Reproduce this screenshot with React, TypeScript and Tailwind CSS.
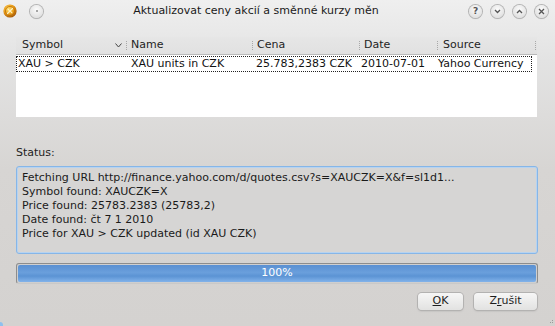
import React from "react";

const font = { fontFamily: '"DejaVu Sans", "Liberation Sans", sans-serif' };

function RoundBtn({ children }: { children: React.ReactNode }) {
  return (
    <div className="w-[13px] h-[13px] rounded-full bg-[radial-gradient(circle_at_50%_35%,#fbfbfb,#d8d8d8)] shadow-[0_0_0_1px_#b4b4b4,0_1px_1px_#c8c8c8] flex items-center justify-center">
      {children}
    </div>
  );
}

function Sep() {
  return <div className="w-0 h-[9px] border-l border-dotted border-[#a9a9a9] shrink-0" />;
}

export default function App() {
  return (
    <div
      className="w-[555px] h-[326px] flex flex-col text-[11px] text-[#1e1e1e] bg-[linear-gradient(to_bottom,#efefef_0px,#e3e3e3_60px,#d7d5d3_170px,#d4d2d0_326px)] relative overflow-hidden"
      style={font}
    >
      {/* Title bar */}
      <div className="h-[22px] flex items-center pl-[3px] pr-[7px] shrink-0">
        <div className="flex items-center gap-[13px] w-[40px] shrink-0">
          <svg width="14" height="14" viewBox="0 0 14 14">
            <defs>
              <radialGradient id="gold" cx="40%" cy="35%" r="65%">
                <stop offset="0" stopColor="#ffdf70" />
                <stop offset="0.6" stopColor="#eb9c14" />
                <stop offset="1" stopColor="#a65a08" />
              </radialGradient>
            </defs>
            <circle cx="7" cy="7" r="6.6" fill="url(#gold)" />
            <circle cx="7" cy="7" r="4.6" fill="none" stroke="#b86f0c" strokeWidth="0.8" />
            <path d="M4.5 9.5 L9.5 4.5 M5 5.2 L6.2 6.4 M7.8 7.6 L9 8.8" stroke="#fff3c4" strokeWidth="1.2" strokeLinecap="round" />
          </svg>
          <RoundBtn>
            <div className="w-[2px] h-[2px] rounded-full bg-[#8a8a8a]" />
          </RoundBtn>
        </div>
        <div className="flex-1 flex items-center justify-center">
          <span className="text-[11px] text-[#1a1a1a]">Aktualizovat ceny akcií a směnné kurzy měn</span>
        </div>
        <div className="flex items-center gap-[9px] shrink-0">
          <RoundBtn>
            <span className="text-[9px] leading-none text-[#555] font-bold" style={font}>?</span>
          </RoundBtn>
          <RoundBtn>
            <svg width="7" height="5" viewBox="0 0 7 5"><path d="M1 1 L3.5 3.5 L6 1" stroke="#555" strokeWidth="1.3" fill="none" /></svg>
          </RoundBtn>
          <RoundBtn>
            <svg width="7" height="5" viewBox="0 0 7 5"><path d="M1 4 L3.5 1.5 L6 4" stroke="#555" strokeWidth="1.3" fill="none" /></svg>
          </RoundBtn>
          <RoundBtn>
            <svg width="7" height="7" viewBox="0 0 7 7"><path d="M1 1 L6 6 M6 1 L1 6" stroke="#555" strokeWidth="1.3" /></svg>
          </RoundBtn>
        </div>
      </div>

      {/* Content */}
      <div className="flex flex-col pl-[16px] pr-[17px] pt-[15px]">
        {/* Table */}
        <div className="flex flex-col w-[521px]">
          <div className="h-[18px] flex items-center border-b border-[#b9b9b9] bg-[linear-gradient(to_bottom,#e6e6e6,#e1e1e1)]">
            <div className="w-[110px] flex items-center pl-[6px] pr-[4px]">
              <span>Symbol</span>
              <svg className="ml-auto" width="7" height="5" viewBox="0 0 7 5"><path d="M0.5 0.5 L3.5 4 L6.5 0.5" stroke="#444" strokeWidth="1" fill="none" /></svg>
            </div>
            <Sep />
            <div className="w-[125px] pl-[4px]">Name</div>
            <Sep />
            <div className="w-[106px] pl-[4px]">Cena</div>
            <Sep />
            <div className="w-[77px] pl-[4px]">Date</div>
            <Sep />
            <div className="w-[97px] pl-[5px]">Source</div>
            <Sep />
          </div>
          <div className="h-[62px] bg-white pt-[1px]">
            <div className="h-[16px] w-[516px] flex items-center border border-dotted border-[#222] text-[#111]">
              <div className="w-[109px] pl-[1px]">XAU &gt; CZK</div>
              <div className="w-[126px] pl-[5px]">XAU units in CZK</div>
              <div className="w-[106px] pl-[4px]">25.783,2383 CZK</div>
              <div className="w-[77px] pl-[3px]">2010-07-01</div>
              <div className="w-[95px] pl-[3px] whitespace-nowrap">Yahoo Currency</div>
            </div>
          </div>
        </div>

        {/* Status */}
        <div className="mt-[29px] h-[14px] leading-[14px]">Status:</div>
        <div className="mt-[6px] h-[88px] w-[522px] rounded-[3px] border border-[#86b6e8] shadow-[inset_0_0_0_1px_#b7d3f0] bg-[#d6d5d4] pl-[5px] pt-[4px] leading-[14px] text-[#1a1a1a]">
          <div>Fetching URL http://finance.yahoo.com/d/quotes.csv?s=XAUCZK=X&amp;f=sl1d1...</div>
          <div>Symbol found: XAUCZK=X</div>
          <div>Price found: 25783.2383 (25783,2)</div>
          <div>Date found: čt 7 1 2010</div>
          <div>Price for XAU &gt; CZK updated (id XAU CZK)</div>
        </div>

        {/* Progress */}
        <div className="mt-[9px] h-[21px] w-[522px] rounded-[3px] border border-[#8d8d8d] border-b-[#c9c9c9] p-[1px] bg-[#cfcfcf]">
          <div className="h-full w-full rounded-[2px] bg-[linear-gradient(to_bottom,#5a90d2_0%,#6a9fdc_45%,#5b93d4_65%,#82b3ea_100%)] flex items-center justify-center text-white text-[11px]">
            100%
          </div>
        </div>

        {/* Buttons */}
        <div className="mt-[9px] flex justify-end gap-[11px] pr-[1px]">
          <div className="w-[45px] h-[17px] rounded-[4px] bg-[linear-gradient(to_bottom,#f6f6f6,#e2e2e1)] shadow-[0_0_0_1px_#b3b2b1,0_1px_2px_#a9a8a7] flex items-center justify-center">
            <span><span className="underline">O</span>K</span>
          </div>
          <div className="w-[63px] h-[17px] rounded-[4px] bg-[linear-gradient(to_bottom,#f6f6f6,#e2e2e1)] shadow-[0_0_0_1px_#b3b2b1,0_1px_2px_#a9a8a7] flex items-center justify-center">
            <span>Z<span className="underline">r</span>ušit</span>
          </div>
        </div>
      </div>

      {/* Resize grip */}
      <div className="absolute right-[2px] bottom-[3px] flex flex-col items-end gap-[1px]">
        <div className="w-[1px] h-[1px] bg-[#9a9a9a]" />
        <div className="flex gap-[1px]"><div className="w-[1px] h-[1px] bg-[#9a9a9a]" /><div className="w-[1px] h-[1px] bg-[#9a9a9a]" /></div>
      </div>
      <div className="absolute left-0 bottom-0 w-[3px] h-[4px] bg-[#8fc0ee] rounded-tr-[3px]" />
    </div>
  );
}
